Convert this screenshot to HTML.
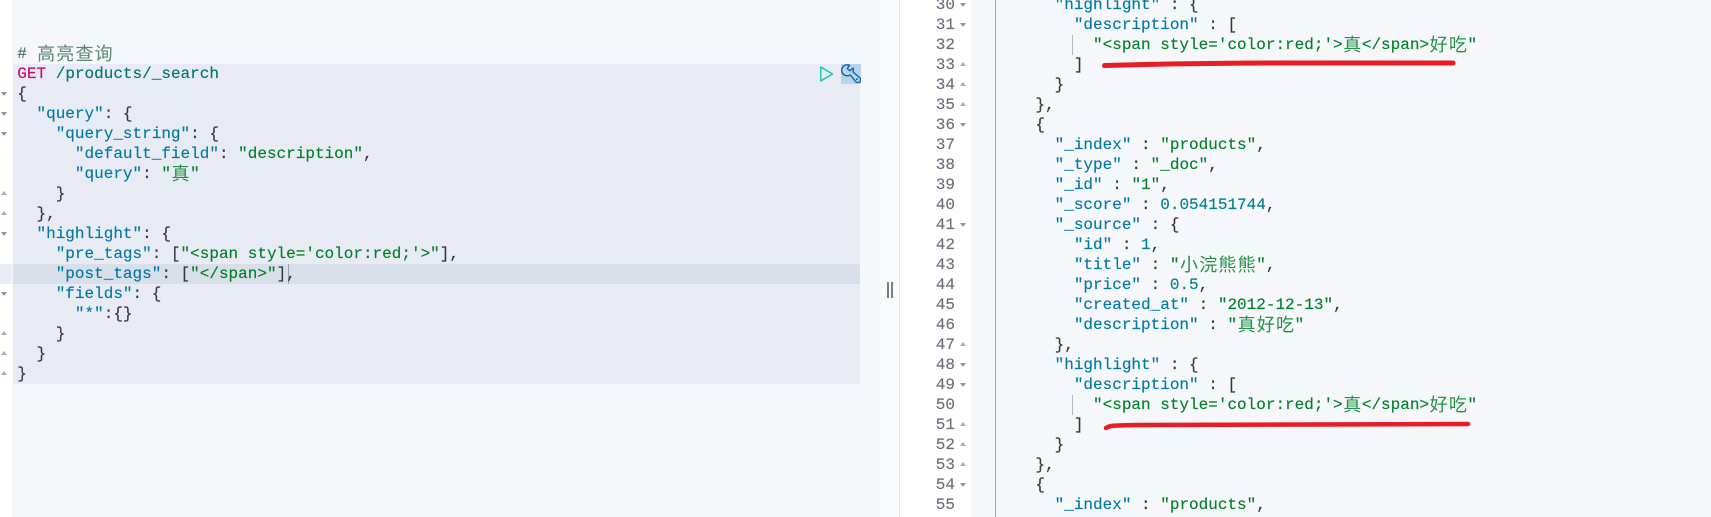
<!DOCTYPE html>
<html><head><meta charset="utf-8"><style>
html,body{margin:0;padding:0;background:#fff}
#r{position:relative;width:1711px;height:517px;overflow:hidden;background:#fff;font:16px/20px "Liberation Mono","Noto Sans CJK SC",monospace;color:#343741;-webkit-text-stroke:.15px}
.a{position:absolute}
.l{position:absolute;white-space:pre;height:20px;line-height:20px}
.k{color:#0079a5}.s{color:#008028}.n{color:#00828a}.p{color:#343741}
.m{color:#c80a68}.u{color:#00756c}.c{color:#41755c}
.l i{font-style:normal;display:inline-block;width:19.2px;text-align:center;font-family:"Noto Sans CJK SC",sans-serif;font-size:18px;line-height:20px;vertical-align:top;position:relative;top:-1.5px;-webkit-text-stroke:0;opacity:.85}
.g{position:absolute;left:900px;width:55px;text-align:right;color:#69707d;height:20px}
.d,.t{position:absolute;width:0;height:0;border-left:3.5px solid transparent;border-right:3.5px solid transparent}
.d{border-top:4px solid #8f94a0}.t{border-bottom:4px solid #a6aab4}
</style></head><body><div id="r">
<div class="a" style="left:12px;top:0;width:869px;height:517px;background:#f5f7fb"></div>
<div class="a" style="left:881px;top:0;width:18px;height:517px;background:#f9fafd"></div>
<div class="a" style="left:899px;top:0;width:1px;height:517px;background:#e6e8ef"></div>
<div class="a" style="left:971px;top:0;width:740px;height:517px;background:#f5f7fb"></div>
<div class="a" style="left:995px;top:0;width:1px;height:517px;background:#a3a7b1"></div>
<div class="a" style="left:13px;top:64px;width:847px;height:320px;background:#e8ebf3"></div>
<div class="a" style="left:0;top:264px;width:12px;height:20px;background:#e9ecf2"></div>
<div class="a" style="left:13px;top:264px;width:847px;height:20px;background:#d9dfe8"></div>
<div class="a" style="left:288px;top:264px;width:1px;height:20px;background:#9aa0ab"></div>

<div class="l" style="left:17.3px;top:44px"><span class="c"># <i>高</i><i>亮</i><i>查</i><i>询</i></span></div>
<div class="l" style="left:17.3px;top:64px"><span class="m">GET</span> <span class="u">/products/_search</span></div>
<div class="l" style="left:17.3px;top:84px">{</div>
<div class="l" style="left:17.3px;top:104px">  <span class="k">"query"</span>: {</div>
<div class="l" style="left:17.3px;top:124px">    <span class="k">"query_string"</span>: {</div>
<div class="l" style="left:17.3px;top:144px">      <span class="k">"default_field"</span>: <span class="s">"description"</span>,</div>
<div class="l" style="left:17.3px;top:164px">      <span class="k">"query"</span>: <span class="s">"<i>真</i>"</span></div>
<div class="l" style="left:17.3px;top:184px">    }</div>
<div class="l" style="left:17.3px;top:204px">  },</div>
<div class="l" style="left:17.3px;top:224px">  <span class="k">"highlight"</span>: {</div>
<div class="l" style="left:17.3px;top:244px">    <span class="k">"pre_tags"</span>: [<span class="s">"&lt;span style='color:red;'&gt;"</span>],</div>
<div class="l" style="left:17.3px;top:264px">    <span class="k">"post_tags"</span>: [<span class="s">"&lt;/span&gt;"</span>],</div>
<div class="l" style="left:17.3px;top:284px">    <span class="k">"fields"</span>: {</div>
<div class="l" style="left:17.3px;top:304px">      <span class="k">"*"</span>:{}</div>
<div class="l" style="left:17.3px;top:324px">    }</div>
<div class="l" style="left:17.3px;top:344px">  }</div>
<div class="l" style="left:17.3px;top:364px">}</div>

<div class="d" style="left:1px;top:92px"></div><div class="d" style="left:1px;top:112px"></div><div class="d" style="left:1px;top:132px"></div>
<div class="t" style="left:1px;top:191px"></div><div class="t" style="left:1px;top:211px"></div>
<div class="d" style="left:1px;top:232px"></div><div class="d" style="left:1px;top:292px"></div>
<div class="t" style="left:1px;top:331px"></div><div class="t" style="left:1px;top:351px"></div><div class="t" style="left:1px;top:371px"></div>

<svg class="a" style="left:819px;top:64px" width="16" height="20" viewBox="0 0 16 20"><path d="M1.8 3 L13.5 10 L1.8 17 Z" fill="none" stroke="#17c5b0" stroke-width="1.4" stroke-linejoin="round"/></svg>
<div class="a" style="left:841px;top:64px;width:20px;height:20px;background:#b6d4ea"></div>
<svg class="a" style="left:841px;top:64px" width="20" height="20" viewBox="0 0 20 20"><path d="M8.5 1.3 C5.5 0 2 1.5 1 4.5 C0 7.5 1.5 10.5 4.5 11.5 C6.5 12 8 11.8 9.5 11 L14.5 17.5 C16 19 19 19 19.6 16.5 C20 15 19.5 14.3 18.5 13.5 L12 8 C12.6 6.5 12.6 5.2 12 4 L9 6.8 L6.2 4.6 Z" fill="none" stroke="#0f62ad" stroke-width="1.4" stroke-linejoin="round"/><circle cx="15.8" cy="15.2" r="1" fill="#0f62ad"/></svg>
<div class="a" style="left:887px;top:282px;width:2px;height:16px;background:#787d89"></div>
<div class="a" style="left:891px;top:282px;width:2px;height:16px;background:#787d89"></div>

<div class="g" style="top:-5px">30</div><div class="g" style="top:15px">31</div><div class="g" style="top:35px">32</div><div class="g" style="top:55px">33</div><div class="g" style="top:75px">34</div><div class="g" style="top:95px">35</div><div class="g" style="top:115px">36</div><div class="g" style="top:135px">37</div><div class="g" style="top:155px">38</div><div class="g" style="top:175px">39</div><div class="g" style="top:195px">40</div><div class="g" style="top:215px">41</div><div class="g" style="top:235px">42</div><div class="g" style="top:255px">43</div><div class="g" style="top:275px">44</div><div class="g" style="top:295px">45</div><div class="g" style="top:315px">46</div><div class="g" style="top:335px">47</div><div class="g" style="top:355px">48</div><div class="g" style="top:375px">49</div><div class="g" style="top:395px">50</div><div class="g" style="top:415px">51</div><div class="g" style="top:435px">52</div><div class="g" style="top:455px">53</div><div class="g" style="top:475px">54</div><div class="g" style="top:495px">55</div>

<div class="d" style="left:960px;top:3px"></div><div class="d" style="left:960px;top:23px"></div>
<div class="t" style="left:960px;top:62px"></div><div class="t" style="left:960px;top:82px"></div><div class="t" style="left:960px;top:102px"></div>
<div class="d" style="left:960px;top:123px"></div><div class="d" style="left:960px;top:223px"></div>
<div class="t" style="left:960px;top:342px"></div>
<div class="d" style="left:960px;top:363px"></div><div class="d" style="left:960px;top:383px"></div>
<div class="t" style="left:960px;top:422px"></div><div class="t" style="left:960px;top:442px"></div><div class="t" style="left:960px;top:462px"></div>
<div class="d" style="left:960px;top:483px"></div>

<div class="a" style="left:1072px;top:35px;width:1px;height:20px;background:#b4b9c4"></div>
<div class="a" style="left:1072px;top:395px;width:1px;height:20px;background:#b4b9c4"></div>

<div class="l" style="left:997px;top:-5px">      <span class="k">"highlight"</span> : {</div>
<div class="l" style="left:997px;top:15px">        <span class="k">"description"</span> : [</div>
<div class="l" style="left:997px;top:35px">          <span class="s">"&lt;span style='color:red;'&gt;<i>真</i>&lt;/span&gt;<i>好</i><i>吃</i>"</span></div>
<div class="l" style="left:997px;top:55px">        ]</div>
<div class="l" style="left:997px;top:75px">      }</div>
<div class="l" style="left:997px;top:95px">    },</div>
<div class="l" style="left:997px;top:115px">    {</div>
<div class="l" style="left:997px;top:135px">      <span class="k">"_index"</span> : <span class="s">"products"</span>,</div>
<div class="l" style="left:997px;top:155px">      <span class="k">"_type"</span> : <span class="s">"_doc"</span>,</div>
<div class="l" style="left:997px;top:175px">      <span class="k">"_id"</span> : <span class="s">"1"</span>,</div>
<div class="l" style="left:997px;top:195px">      <span class="k">"_score"</span> : <span class="n">0.054151744</span>,</div>
<div class="l" style="left:997px;top:215px">      <span class="k">"_source"</span> : {</div>
<div class="l" style="left:997px;top:235px">        <span class="k">"id"</span> : <span class="n">1</span>,</div>
<div class="l" style="left:997px;top:255px">        <span class="k">"title"</span> : <span class="s">"<i>小</i><i>浣</i><i>熊</i><i>熊</i>"</span>,</div>
<div class="l" style="left:997px;top:275px">        <span class="k">"price"</span> : <span class="n">0.5</span>,</div>
<div class="l" style="left:997px;top:295px">        <span class="k">"created_at"</span> : <span class="s">"2012-12-13"</span>,</div>
<div class="l" style="left:997px;top:315px">        <span class="k">"description"</span> : <span class="s">"<i>真</i><i>好</i><i>吃</i>"</span></div>
<div class="l" style="left:997px;top:335px">      },</div>
<div class="l" style="left:997px;top:355px">      <span class="k">"highlight"</span> : {</div>
<div class="l" style="left:997px;top:375px">        <span class="k">"description"</span> : [</div>
<div class="l" style="left:997px;top:395px">          <span class="s">"&lt;span style='color:red;'&gt;<i>真</i>&lt;/span&gt;<i>好</i><i>吃</i>"</span></div>
<div class="l" style="left:997px;top:415px">        ]</div>
<div class="l" style="left:997px;top:435px">      }</div>
<div class="l" style="left:997px;top:455px">    },</div>
<div class="l" style="left:997px;top:475px">    {</div>
<div class="l" style="left:997px;top:495px">      <span class="k">"_index"</span> : <span class="s">"products"</span>,</div>

<svg class="a" style="left:0;top:0" width="1711" height="517" viewBox="0 0 1711 517"><path d="M1104.5 65.5 C1160 64 1210 63 1280 63 C1350 63 1410 63.5 1453 63" fill="none" stroke="#e81c24" stroke-width="5" stroke-linecap="round"/><path d="M1106 428 C1110 425 1118 425.5 1135 425 C1220 424 1340 425 1468 424" fill="none" stroke="#e81c24" stroke-width="4.5" stroke-linecap="round"/></svg>
</div></body></html>
